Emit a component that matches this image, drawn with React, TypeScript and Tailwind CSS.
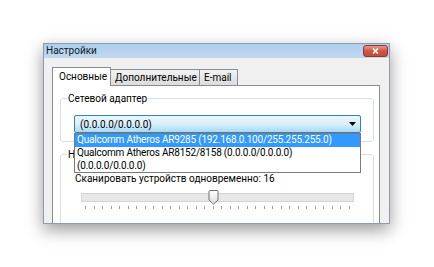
const font = "font-['Roboto','Noto_Sans',sans-serif]";

const ticks = Array.from({ length: 32 }, (_, i) => i);

function Tabs() {
  return (
    <div className="flex items-end h-[27px] text-[10px] text-black leading-none">
      <div className="w-[59px] h-[19px] -mb-px z-10 bg-white border border-b-0 border-[#898c95] flex items-start pt-[4px] pl-[6px]">
        Основные
      </div>
      <div className="w-[89px] h-[16px] bg-gradient-to-b from-[#f2f2f2] to-[#dcdcdc] border border-l-0 border-b-0 border-[#898c95] flex items-start pt-[3px] pl-[4px] whitespace-nowrap">
        Дополнительные
      </div>
      <div className="w-[38px] h-[16px] bg-gradient-to-b from-[#f2f2f2] to-[#dcdcdc] border border-l-0 border-b-0 border-[#898c95] flex items-start pt-[3px] pl-[4px]">
        E-mail
      </div>
    </div>
  );
}

function Combo() {
  const rows = [
    "Qualcomm Atheros AR9285 (192.168.0.100/255.255.255.0)",
    "Qualcomm Atheros AR8152/8158 (0.0.0.0/0.0.0.0)",
    "(0.0.0.0/0.0.0.0)",
  ];
  return (
    <div className="relative ml-[13px] w-[287px] h-[18px]">
      <div className="h-full rounded-[2px] border border-[#3c7fb1] bg-gradient-to-b from-[#eaf6fd] via-[#d9f0fc] to-[#a7d9f5] flex items-center justify-between pl-[5px] pr-[4px]">
        <span>(0.0.0.0/0.0.0.0)</span>
        <svg width="7" height="4" viewBox="0 0 7 4">
          <path d="M0 0h7L3.5 4z" fill="#000" />
        </svg>
      </div>
      <div className="absolute left-0 top-full w-full border border-[#7a7a7a] bg-white z-20 leading-[12.5px] whitespace-nowrap tracking-[-0.2px]">
        {rows.map((r, i) => (
          <div
            key={r}
            className={
              i === 0
                ? "bg-[#3399ff] text-white pl-[2px] h-[13px]"
                : "text-black pl-[2px] h-[12.5px]"
            }
          >
            {r}
          </div>
        ))}
      </div>
    </div>
  );
}

function Slider() {
  return (
    <div className="mt-[4px] ml-[20px] w-[273px]">
      <div className="relative h-[15px] flex items-center">
        <div className="w-full h-[9px] bg-[#e8e8e8] border border-[#d4d4d4]" />
        <svg className="absolute left-[127px] top-0" width="11" height="15" viewBox="0 0 11 15">
          <defs>
            <linearGradient id="th" x1="0" y1="0" x2="0" y2="1">
              <stop offset="0" stopColor="#ffffff" />
              <stop offset="1" stopColor="#dcdcdc" />
            </linearGradient>
          </defs>
          <path d="M1 1.5Q1 .5 2 .5h7q1 0 1 1V10l-4.5 4.2L1 10z" fill="url(#th)" stroke="#707070" />
        </svg>
      </div>
      <div className="flex justify-between px-[4px] mt-[1px]">
        {ticks.map((t) => (
          <div key={t} className="w-px h-[3px] bg-[#a0a0a0]" />
        ))}
      </div>
    </div>
  );
}

export default function App() {
  return (
    <div className={`w-[434px] h-[267px] bg-white overflow-hidden pt-[43px] pl-[43px] ${font}`}>
      <div className="w-[347px] h-[181px] flex flex-col overflow-hidden bg-[#f0f0f0] border border-[#8e9cae] shadow-[0_6px_16px_rgba(0,0,0,0.4)]">
        <div className="h-[14px] shrink-0 flex items-center justify-between bg-gradient-to-b from-[#aecdee] to-[#c3d8ee] pl-[2px] pr-[1px]">
          <span className="text-[10px] text-[#0d1a2a] leading-none">Настройки</span>
          <div className="w-[25px] h-[12px] rounded-[3px] border border-[#8a3a33] bg-gradient-to-b from-[#e6988a] via-[#d2533f] to-[#c44a38] flex items-center justify-center">
            <svg width="7" height="6" viewBox="0 0 7 6">
              <path d="M1 .5l5 5M6 .5l-5 5" stroke="#fff" strokeWidth="1.6" />
            </svg>
          </div>
        </div>
        <div className="flex-1 pl-[8px] pr-[9px] flex flex-col">
          <Tabs />
          <div className="flex-1 bg-white border border-b-0 border-[#898c95] px-[7px] pt-[5px] text-[10px] text-black">
            <fieldset className="w-[314px] border border-[#d5dfe5] rounded-[3px] pb-[8px]">
              <legend className="ml-[6px] px-[1px] leading-[15px]">Сетевой адаптер</legend>
              <div className="mt-[9px]">
                <Combo />
              </div>
            </fieldset>
            <fieldset className="mt-[5px] w-[314px] h-[100px] border border-[#d5dfe5] rounded-[3px]">
              <legend className="ml-[6px] px-[1px] leading-[15px]">Настройки сканирования</legend>
              <div className="mt-[9px] ml-[14px] leading-[15px]">Сканировать устройств одновременно: 16</div>
              <Slider />
            </fieldset>
          </div>
        </div>
      </div>
    </div>
  );
}
